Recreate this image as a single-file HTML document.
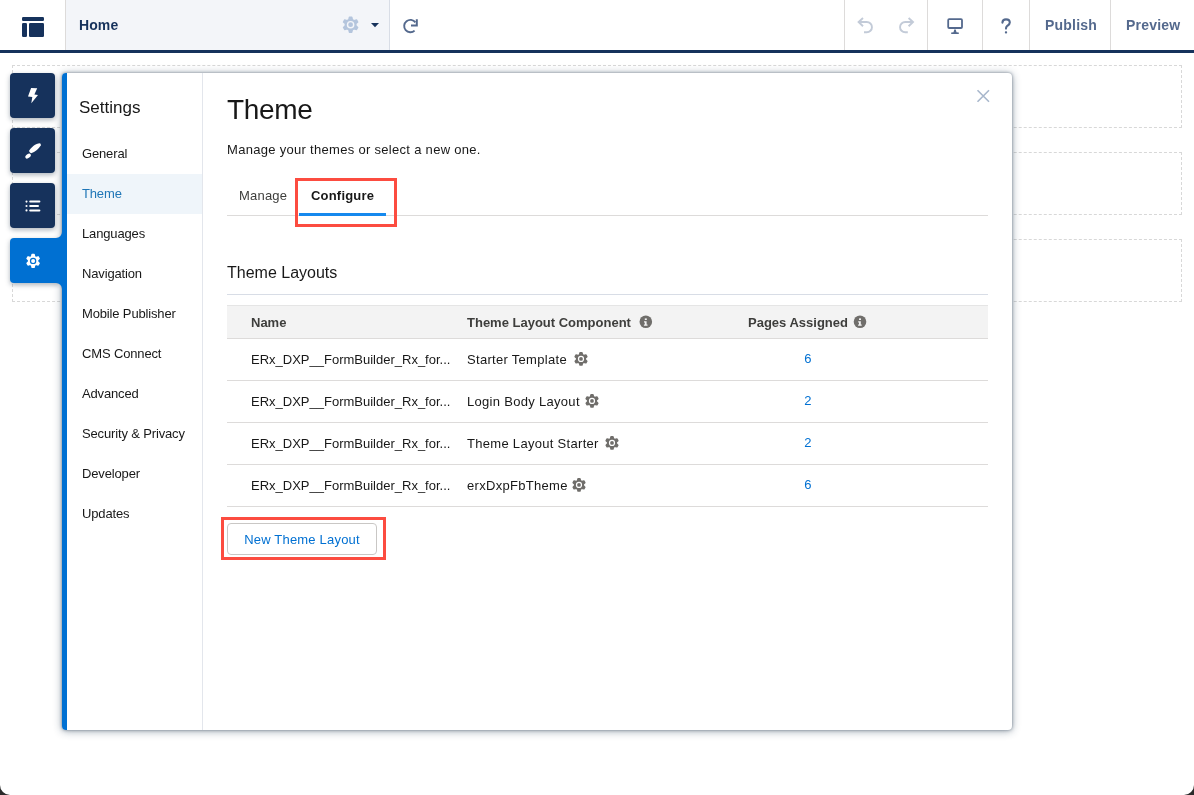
<!DOCTYPE html>
<html><head><meta charset="utf-8">
<style>
*{box-sizing:border-box;margin:0;padding:0}
html,body{width:1194px;height:795px;overflow:hidden;background:#fff;font-family:"Liberation Sans",sans-serif;color:#181818}
.abs{position:absolute;white-space:nowrap}
#hdr{position:absolute;left:0;top:0;width:1194px;height:50px;background:#fff}
#hbar{position:absolute;left:0;top:50px;width:1194px;height:3px;background:#16325c}
.vd{position:absolute;top:0;width:1px;height:50px;background:#dddbda}
#homebox{position:absolute;left:66px;top:0;width:324px;height:50px;background:#f3f5f9;border-right:1px solid #d8dde6}
.dash{position:absolute;left:12px;width:1170px;height:63px;border:1px dashed #d8d8d8}
.tab{position:absolute;left:10px;width:45px;height:45px;background:#16325c;border-radius:4px;box-shadow:0 2px 5px rgba(20,40,60,.35)}
#modal{position:absolute;left:62px;top:73px;width:950px;height:657px;background:#fff;border-radius:4px;box-shadow:0 0 3px rgba(30,50,70,.5),0 1px 8px rgba(30,55,80,.45);overflow:hidden}
#mblue{position:absolute;left:0;top:0;width:5px;height:657px;background:#0070d2}
#nav{position:absolute;left:5px;top:0;width:136px;height:657px;border-right:1px solid #e3e6ec}
.ni{position:absolute;left:0;width:135px;height:40px;line-height:40px;padding-left:15px;font-size:13px;color:#181818;padding-top:1px;letter-spacing:-0.15px}
.th{font-size:13px;line-height:16px;font-weight:bold;color:#3e3e3c}
.tr{left:25px;width:761px;height:42px;border-bottom:1px solid #dddbda}
.td{font-size:13px;line-height:16px;color:#181818;letter-spacing:0.3px}
.num{color:#0070d2}
.red{position:absolute;border:3px solid #fc4c40}
svg{position:absolute;left:0;top:0;overflow:visible}
</style></head><body><div id="wrap" style="position:absolute;left:0;top:0;width:1194px;height:795px;will-change:transform">
<div id="hdr">
  <div class="vd" style="left:65px"></div>
  <div id="homebox"></div>
  <div class="abs" style="left:79px;top:17px;font-size:14px;line-height:16px;font-weight:bold;color:#16325c;letter-spacing:0.1px">Home</div>
  <div class="vd" style="left:844px"></div>
  <div class="vd" style="left:927px"></div>
  <div class="vd" style="left:982px"></div>
  <div class="vd" style="left:1029px"></div>
  <div class="vd" style="left:1110px"></div>
  <div class="abs" style="left:1045px;top:17px;font-size:14px;line-height:16px;font-weight:bold;color:#54698d;letter-spacing:0.2px">Publish</div>
  <div class="abs" style="left:1126px;top:17px;font-size:14px;line-height:16px;font-weight:bold;color:#54698d;letter-spacing:0.2px">Preview</div>
</div>
<div id="hbar"></div>

<div class="dash" style="top:65px"></div>
<div class="dash" style="top:152px"></div>
<div class="dash" style="top:239px"></div>

<div class="tab" style="top:73px"></div>
<div class="tab" style="top:128px"></div>
<div class="tab" style="top:183px"></div>
<div class="abs" style="left:10px;top:238px;width:50px;height:45px;background:#0070d2;border-radius:4px 0 0 4px;box-shadow:0 2px 5px rgba(20,40,60,.35)"></div>
<svg width="1194" height="795" style="z-index:1"><rect x="22" y="17" width="22" height="4" rx="1.2" fill="#16325c"/><rect x="22" y="23" width="5" height="14" rx="1.2" fill="#16325c"/><rect x="29" y="23" width="15" height="14" rx="1.2" fill="#16325c"/><polygon points="348.00,20.20 348.90,19.47 349.41,17.19 351.79,17.19 352.30,19.47 353.20,20.20 354.28,20.61 356.51,19.92 357.70,21.98 355.98,23.56 355.80,24.70 355.98,25.84 357.70,27.42 356.51,29.48 354.28,28.79 353.20,29.20 352.30,29.93 351.79,32.21 349.41,32.21 348.90,29.93 348.00,29.20 346.92,28.79 344.69,29.48 343.50,27.42 345.22,25.84 345.40,24.70 345.22,23.56 343.50,21.98 344.69,19.92 346.92,20.61" fill="#b4c5dd" stroke="#b4c5dd" stroke-width="1.4" stroke-linejoin="round"/><circle cx="350.6" cy="24.7" r="3.8" fill="#f3f5f9"/><circle cx="350.6" cy="24.7" r="2.4" fill="#b4c5dd"/><path d="M371 23 L379 23 L375 27.3 Z" fill="#16325c"/><path d="M414.6 30.6 A6.2 6.2 0 1 1 415.4 22.4" fill="none" stroke="#54698d" stroke-width="1.9"/><path d="M416.8 19.2 L416.8 25.4 L411 25.4" fill="none" stroke="#54698d" stroke-width="2"/><path d="M863 18 L858.6 22 L863 26.2 M858.6 22 L866.8 22 A5.15 5.15 0 0 1 866.8 32.3 L864 32.3" fill="none" stroke="#c3cbd8" stroke-width="1.9" stroke-linejoin="miter"/><path d="M908.6 18 L913 22 L908.6 26.2 M913 22 L905.2 22 A5.15 5.15 0 0 0 905.2 32.3 L907.8 32.3" fill="none" stroke="#c3cbd8" stroke-width="1.9"/><rect x="948.2" y="19.2" width="13.8" height="8.8" rx="1" fill="none" stroke="#54698d" stroke-width="1.8"/><path d="M954.3 29.6 h1.4 l0.8 2.6 l2.3 0.4 v1.3 h-7.6 v-1.3 l2.3 -0.4 z" fill="#54698d"/><path d="M1002.4 22.6 C1002.6 20.4 1004 19.4 1006 19.4 C1008.3 19.4 1009.8 20.8 1009.8 22.6 C1009.8 24.6 1008 25.3 1006.9 26.2 C1006.2 26.8 1006 27.4 1006 28.6" fill="none" stroke="#54698d" stroke-width="2.1" stroke-linecap="round"/><rect x="1004.9" y="31.2" width="2.2" height="2.3" rx="0.8" fill="#54698d"/><path d="M31.1 88 L37.2 88.2 L34.4 94.4 L38 95.1 L31.3 103.3 L32.3 97 L28 96.6 Z" fill="#fff"/><path d="M-6.4 -1.7 C-2.5 -3.1 3 -3.3 6.9 -0.6 C6.9 0.6 6.6 1.2 6 1.6 C2 3.1 -2.5 2.9 -6.4 1.7 C-6.9 1.2 -6.9 -1.2 -6.4 -1.7 Z" fill="#fff" transform="translate(35.1 148.0) rotate(-39)"/><ellipse cx="0" cy="0" rx="3.1" ry="1.9" fill="#fff" transform="translate(28.1 156.1) rotate(-37)"/><circle cx="26.5" cy="201.6" r="1.05" fill="#fff"/><rect x="29.2" y="200.6" width="11.2" height="2" rx="1" fill="#fff"/><circle cx="26.5" cy="206" r="1.05" fill="#fff"/><rect x="29.2" y="205" width="9.8" height="2" rx="1" fill="#fff"/><circle cx="26.5" cy="210.4" r="1.05" fill="#fff"/><rect x="29.2" y="209.4" width="11.2" height="2" rx="1" fill="#fff"/><polygon points="30.90,257.09 31.65,256.43 32.08,254.48 34.12,254.48 34.55,256.43 35.30,257.09 36.24,257.41 38.15,256.81 39.17,258.57 37.70,259.92 37.50,260.90 37.70,261.88 39.17,263.23 38.15,264.99 36.24,264.39 35.30,264.71 34.55,265.37 34.12,267.32 32.08,267.32 31.65,265.37 30.90,264.71 29.96,264.39 28.05,264.99 27.03,263.23 28.50,261.88 28.70,260.90 28.50,259.92 27.03,258.57 28.05,256.81 29.96,257.41" fill="#fff" stroke="#fff" stroke-width="1.4" stroke-linejoin="round"/><circle cx="33.1" cy="260.9" r="3.2" fill="#0070d2"/><circle cx="33.1" cy="260.9" r="2.0" fill="#fff"/></svg>
<div id="modal">
  <div id="mblue"></div>
  <div id="nav">
    <div class="abs" style="left:12px;top:25px;font-size:17px;line-height:20px">Settings</div>
    <div class="ni" style="top:60px">General</div>
    <div class="ni" style="top:101px;height:40px;background:#eff5fa;color:#1f76b7;padding-top:0px">Theme</div>
    <div class="ni" style="top:140px">Languages</div>
    <div class="ni" style="top:180px">Navigation</div>
    <div class="ni" style="top:220px">Mobile Publisher</div>
    <div class="ni" style="top:260px">CMS Connect</div>
    <div class="ni" style="top:300px">Advanced</div>
    <div class="ni" style="top:340px">Security &amp; Privacy</div>
    <div class="ni" style="top:380px">Developer</div>
    <div class="ni" style="top:420px">Updates</div>
  </div>
  <div id="main" class="abs" style="left:140px;top:0;width:810px;height:657px">
    <div class="abs" style="left:25px;top:21px;font-size:28px;line-height:32px;letter-spacing:-0.3px">Theme</div>
    <div class="abs" style="left:25px;top:69px;font-size:13px;line-height:16px;letter-spacing:0.3px">Manage your themes or select a new one.</div>
    <div class="abs" style="left:25px;top:142px;width:761px;height:1px;background:#dddbda"></div>
    <div class="abs" style="left:37px;top:115px;font-size:13px;line-height:16px;color:#3e3e3c;letter-spacing:0.2px">Manage</div>
    <div class="abs" style="left:109px;top:115px;font-size:13px;line-height:16px;font-weight:bold;color:#181818;letter-spacing:0.2px">Configure</div>
    <div class="abs" style="left:97px;top:140px;width:87px;height:3px;background:#1589ee"></div>
    <div class="abs" style="left:25px;top:190px;font-size:16px;line-height:20px">Theme Layouts</div>
    <div class="abs" style="left:25px;top:221px;width:761px;height:1px;background:#d8dde6"></div>
    <div class="abs" style="left:25px;top:232px;width:761px;height:34px;background:#f3f3f3;border-top:1px solid #e5e5e5;border-bottom:1px solid #dddbda"></div>
    <div class="abs th" style="left:49px;top:242px">Name</div>
    <div class="abs th" style="left:265px;top:242px">Theme Layout Component</div>
    <div class="abs th" style="left:546px;top:242px">Pages Assigned</div>
    <div class="abs tr" style="top:266px"></div>
    <div class="abs td" style="left:49px;top:279px;letter-spacing:0">ERx_DXP__FormBuilder_Rx_for...</div>
    <div class="abs td" style="left:265px;top:279px">Starter Template</div>
    <div class="abs td num" style="left:596px;top:278px;width:20px;text-align:center">6</div>
    <div class="abs tr" style="top:308px"></div>
    <div class="abs td" style="left:49px;top:321px;letter-spacing:0">ERx_DXP__FormBuilder_Rx_for...</div>
    <div class="abs td" style="left:265px;top:321px">Login Body Layout</div>
    <div class="abs td num" style="left:596px;top:320px;width:20px;text-align:center">2</div>
    <div class="abs tr" style="top:350px"></div>
    <div class="abs td" style="left:49px;top:363px;letter-spacing:0">ERx_DXP__FormBuilder_Rx_for...</div>
    <div class="abs td" style="left:265px;top:363px">Theme Layout Starter</div>
    <div class="abs td num" style="left:596px;top:362px;width:20px;text-align:center">2</div>
    <div class="abs tr" style="top:392px"></div>
    <div class="abs td" style="left:49px;top:405px;letter-spacing:0">ERx_DXP__FormBuilder_Rx_for...</div>
    <div class="abs td" style="left:265px;top:405px">erxDxpFbTheme</div>
    <div class="abs td num" style="left:596px;top:404px;width:20px;text-align:center">6</div>
    <div class="abs" style="left:25px;top:450px;width:150px;height:32px;border:1px solid #c9c7c5;border-radius:4px;font-size:13px;line-height:32px;text-align:center;color:#0070d2;letter-spacing:0.2px">New Theme Layout</div>
  </div>
  <svg width="950" height="657"><circle cx="583.8" cy="248.8" r="6.3" fill="#706e6b"/><rect x="582.8" y="245.39999999999998" width="2" height="1.6" fill="#f3f3f3"/><path d="M582.0 248.2 h2.6 v3.4 h0.9 v1.2 h-3.6 v-1.2 h0.9 v-2.2 h-0.8 z" fill="#f3f3f3"/><circle cx="798" cy="248.8" r="6.3" fill="#706e6b"/><rect x="797" y="245.39999999999998" width="2" height="1.6" fill="#f3f3f3"/><path d="M796.2 248.2 h2.6 v3.4 h0.9 v1.2 h-3.6 v-1.2 h0.9 v-2.2 h-0.8 z" fill="#f3f3f3"/><polygon points="516.85,282.18 517.58,281.53 518.01,279.68 519.99,279.68 520.42,281.53 521.15,282.18 522.08,282.48 523.90,281.94 524.88,283.64 523.50,284.94 523.30,285.90 523.50,286.86 524.88,288.16 523.90,289.86 522.08,289.32 521.15,289.62 520.42,290.27 519.99,292.12 518.01,292.12 517.58,290.27 516.85,289.62 515.92,289.32 514.10,289.86 513.12,288.16 514.50,286.86 514.70,285.90 514.50,284.94 513.12,283.64 514.10,281.94 515.92,282.48" fill="#706e6b" stroke="#706e6b" stroke-width="1.4" stroke-linejoin="round"/><circle cx="519" cy="285.9" r="3.1" fill="#fff"/><circle cx="519" cy="285.9" r="1.9" fill="#706e6b"/><polygon points="527.85,324.18 528.58,323.53 529.01,321.68 530.99,321.68 531.42,323.53 532.15,324.18 533.08,324.48 534.90,323.94 535.88,325.64 534.50,326.94 534.30,327.90 534.50,328.86 535.88,330.16 534.90,331.86 533.08,331.32 532.15,331.62 531.42,332.27 530.99,334.12 529.01,334.12 528.58,332.27 527.85,331.62 526.92,331.32 525.10,331.86 524.12,330.16 525.50,328.86 525.70,327.90 525.50,326.94 524.12,325.64 525.10,323.94 526.92,324.48" fill="#706e6b" stroke="#706e6b" stroke-width="1.4" stroke-linejoin="round"/><circle cx="530" cy="327.9" r="3.1" fill="#fff"/><circle cx="530" cy="327.9" r="1.9" fill="#706e6b"/><polygon points="547.85,366.18 548.58,365.53 549.01,363.68 550.99,363.68 551.42,365.53 552.15,366.18 553.08,366.48 554.90,365.94 555.88,367.64 554.50,368.94 554.30,369.90 554.50,370.86 555.88,372.16 554.90,373.86 553.08,373.32 552.15,373.62 551.42,374.27 550.99,376.12 549.01,376.12 548.58,374.27 547.85,373.62 546.92,373.32 545.10,373.86 544.12,372.16 545.50,370.86 545.70,369.90 545.50,368.94 544.12,367.64 545.10,365.94 546.92,366.48" fill="#706e6b" stroke="#706e6b" stroke-width="1.4" stroke-linejoin="round"/><circle cx="550" cy="369.9" r="3.1" fill="#fff"/><circle cx="550" cy="369.9" r="1.9" fill="#706e6b"/><polygon points="514.85,408.18 515.58,407.53 516.01,405.68 517.99,405.68 518.42,407.53 519.15,408.18 520.08,408.48 521.90,407.94 522.88,409.64 521.50,410.94 521.30,411.90 521.50,412.86 522.88,414.16 521.90,415.86 520.08,415.32 519.15,415.62 518.42,416.27 517.99,418.12 516.01,418.12 515.58,416.27 514.85,415.62 513.92,415.32 512.10,415.86 511.12,414.16 512.50,412.86 512.70,411.90 512.50,410.94 511.12,409.64 512.10,407.94 513.92,408.48" fill="#706e6b" stroke="#706e6b" stroke-width="1.4" stroke-linejoin="round"/><circle cx="517" cy="411.9" r="3.1" fill="#fff"/><circle cx="517" cy="411.9" r="1.9" fill="#706e6b"/><path d="M915.5 17.299999999999997 L927 28.799999999999997 M927 17.299999999999997 L915.5 28.799999999999997" stroke="#a8b7cc" stroke-width="1.6" fill="none"/></svg>
  <div class="red" style="left:233px;top:105px;width:102px;height:49px"></div>
  <div class="red" style="left:159px;top:444px;width:165px;height:43px"></div>
</div>
<svg width="1194" height="795"><path d="M50 238 H67 V283 H50 Z M56 238 A6 6 0 0 0 62 232 L62 238 Z M56 283 A6 6 0 0 1 62 289 L62 283 Z" fill="#0070d2"/></svg>
<svg width="1194" height="795"><path d="M0 785 A10 10 0 0 0 10 795 L0 795 Z" fill="#2b2b2b"/><path d="M1194 785 A10 10 0 0 1 1184 795 L1194 795 Z" fill="#2b2b2b"/></svg>
</div></body></html>
